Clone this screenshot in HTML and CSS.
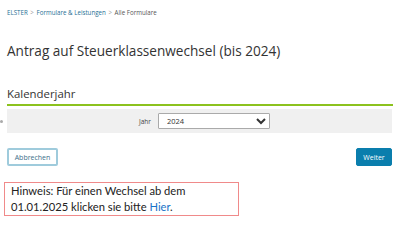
FILE: index.html
```html
<!doctype html>
<html lang="de">
	<head>
		<meta charset="UTF-8">
		<title>Antrag auf Steuerklassenwechsel</title>
		<link rel="stylesheet" href="styles.css">
	</head>
	<body>
		<div class="page">
			<div class="crumbs">
				<a href="#">ELSTER</a>
				<span class="sep">&gt;</span>
				<a href="#">Formulare &amp; Leistungen</a>
				<span class="sep">&gt;</span>
				<span class="current">Alle Formulare</span>
			</div>
			<h1>Antrag auf Steuerklassenwechsel (bis 2024)</h1>
			<h2>Kalenderjahr</h2>
			<div class="row">
				<span class="mark"></span>
				<label for="jahr">Jahr</label>
				<select id="jahr">
					<option>2024</option>
				</select>
			</div>
			<div class="buttons">
				<button class="btn-back">Abbrechen</button>
				<button class="btn-next">Weiter</button>
			</div>
		</div>
		<div class="hint">
			Hinweis: Für einen Wechsel ab dem<br>
			01.01.2025 klicken sie bitte <a href="#">Hier</a>.
		</div>
	</body>
</html>
```

FILE: styles.css
```css
html,body,div,h1,h2,select,button {
	margin: 0;
	padding: 0;
	box-sizing: border-box;
}
body {
	font-family: "Open Sans", sans-serif;
	color: #333;
	background: #fff;
	width: 400px;
	height: 240px;
	overflow: hidden;
}
.page {
	padding: 0 7px;
}
.crumbs {
	font-size: 6.2px;
	padding-top: 8px;
	height: 20px;
	color: #555;
}
.crumbs a {
	color: #1f6f95;
	text-decoration: none;
}
.crumbs .sep {
	color: #999;
	margin: 0 1px;
}
h1 {
	font-size: 13.6px;
	font-weight: normal;
	color: #333;
	margin-top: 21px;
	line-height: 20px;
}
h2 {
	font-size: 11.4px;
	font-weight: normal;
	color: #333;
	margin-top: 25px;
	line-height: 16px;
	padding-bottom: 2px;
	border-bottom: 2px solid #8cc21e;
}
.row {
	position: relative;
	display: flex;
	align-items: center;
	justify-content: center;
	gap: 7px;
	background: #f0f0f0;
	margin: 3px 1px 0 0;
	height: 24px;
	padding-left: 10px;
}
.row .mark {
	position: absolute;
	left: -7px;
	top: 11px;
	width: 3px;
	height: 3px;
	border-radius: 50%;
	background: #aaa;
}
.row label {
	font-size: 6.5px;
	color: #444;
}
.row select {
	width: 112px;
	height: 16px;
	font-family: "Open Sans", sans-serif;
	font-size: 7.5px;
	padding-left: 4px;
	border: 1px solid #aaa;
	border-radius: 1px;
	background: #fff;
	color: #333;
}
.buttons {
	display: flex;
	justify-content: space-between;
	margin: 15px 1px 0 0;
}
.buttons button {
	height: 18px;
	font-family: "Open Sans", sans-serif;
	font-size: 7px;
	border-radius: 2px;
	cursor: pointer;
}
.btn-back {
	width: 51px;
	background: #fff;
	color: #3d6f8a;
	border: 2px solid #9fcbdc;
}
.btn-next {
	width: 36px;
	background: #0a7ead;
	color: #fff;
	border: 1px solid #0a7ead;
}
.hint {
	margin: 16px 0 0 4px;
	width: 235px;
	height: 34px;
	border: 1px solid #f08a8a;
	padding: 0 0 0 6px;
	font-family: "Lato", sans-serif;
	font-size: 11.2px;
	line-height: 16px;
	color: #222;
}
.hint a {
	color: #1a73c8;
	text-decoration: none;
}
```
